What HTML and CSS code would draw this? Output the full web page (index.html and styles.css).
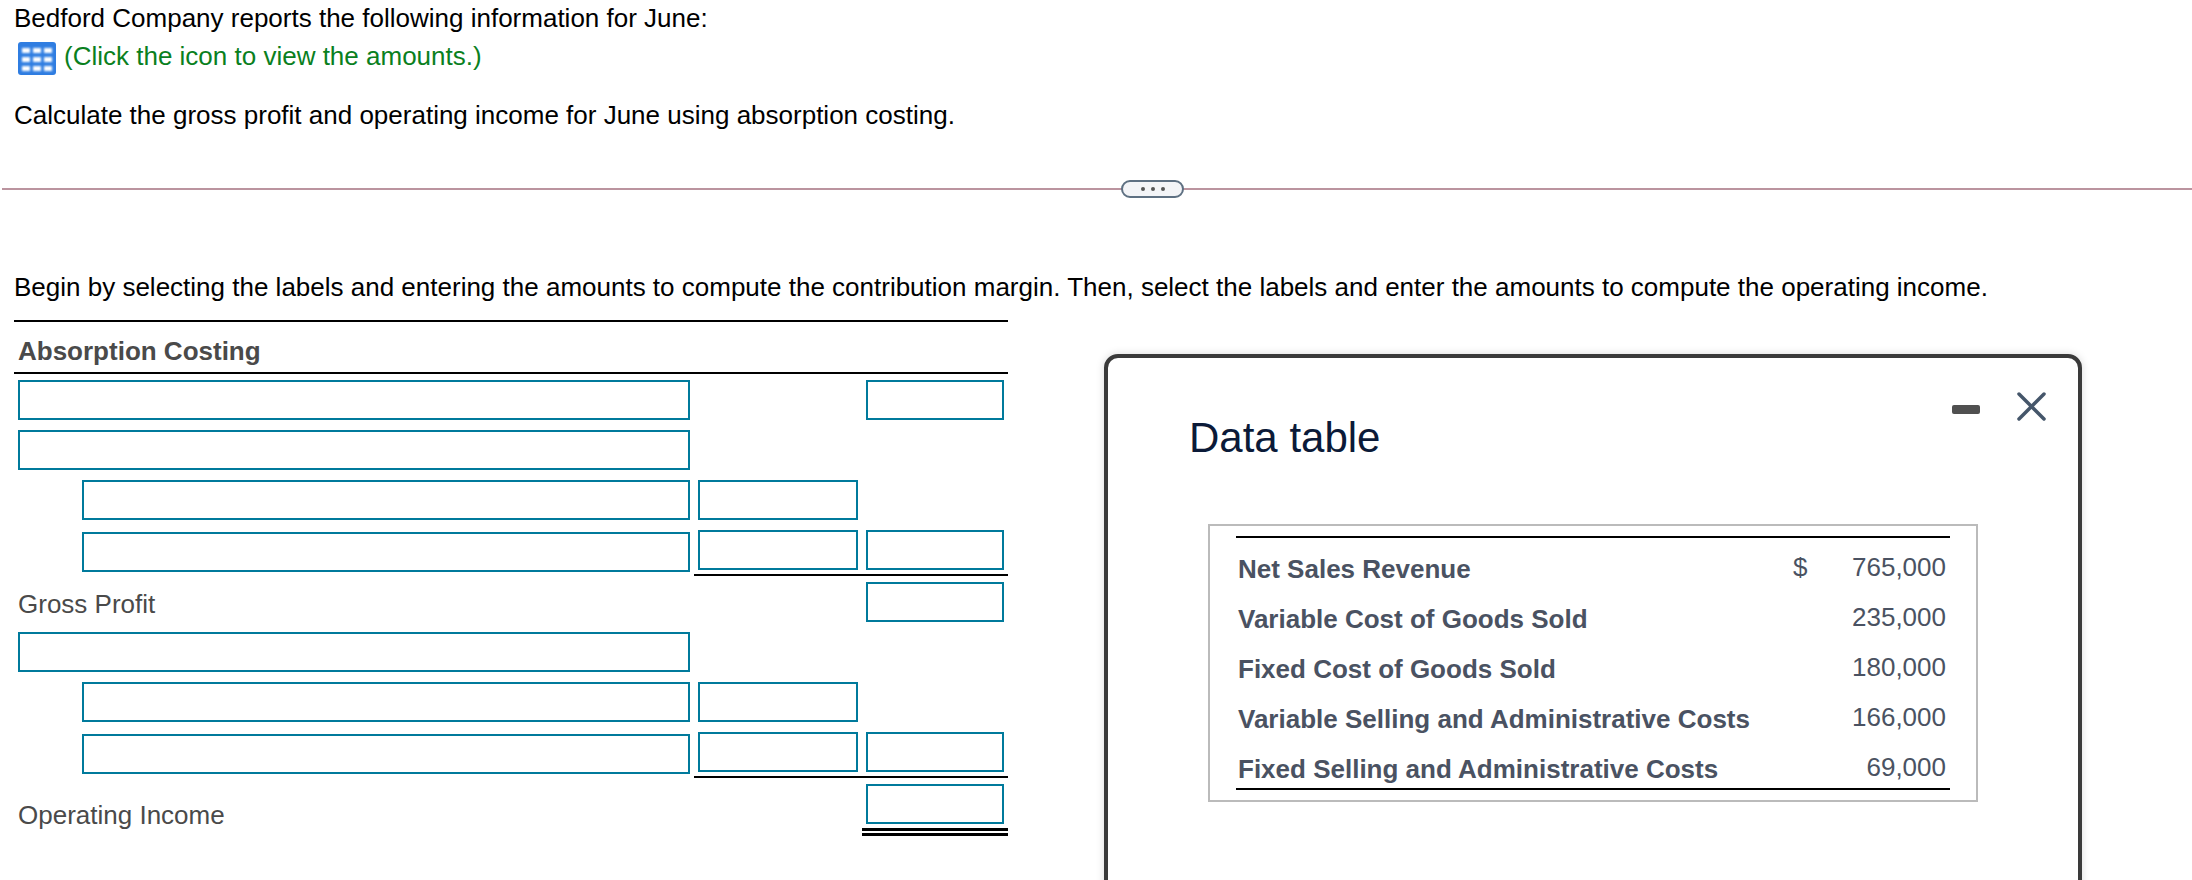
FILE: index.html
```html
<!DOCTYPE html>
<html lang="en">
    <head>
        <meta charset="UTF-8" />
        <title>Absorption Costing</title>
        <link rel="stylesheet" href="styles.css">
    </head>
    <body>
        <!-- question -->
        <section class="question">
            <p class="line">Bedford Company reports the following information for June:</p>
            <p class="line hint">
                <svg class="grid-icon" width="38" height="33" viewBox="0 0 38 33">
                    <defs>
                        <filter id="soft"><feGaussianBlur stdDeviation="0.8" /></filter>
                    </defs>
                    <rect width="38" height="33" rx="3" fill="#2f7de1" />
                    <g fill="#fff" filter="url(#soft)">
                        <rect x="4" y="6" width="8" height="5" />
                        <rect x="15" y="6" width="8" height="5" />
                        <rect x="26" y="6" width="8" height="5" />
                        <rect x="4" y="15" width="8" height="5" />
                        <rect x="15" y="15" width="8" height="5" />
                        <rect x="26" y="15" width="8" height="5" />
                        <rect x="4" y="24" width="8" height="5" />
                        <rect x="15" y="24" width="8" height="5" />
                        <rect x="26" y="24" width="8" height="5" />
                    </g>
                </svg>
                <span class="hint-text">(Click the icon to view the amounts.)</span>
            </p>
            <p class="line calc">Calculate the gross profit and operating income for June using absorption costing.</p>
        </section>

        <!-- divider -->
        <div class="divider">
            <button class="more"><i></i><i></i><i></i></button>
        </div>

        <p class="line intro">Begin by selecting the labels and entering the amounts to compute the contribution margin. Then, select the labels and enter the amounts to compute the operating income.</p>

        <!-- worksheet -->
        <section class="sheet">
            <h2 class="sheet-title">Absorption Costing</h2>

            <div class="row">
                <div class="cell"><input class="box" /></div>
                <div class="cell"></div>
                <div class="cell"><input class="box" /></div>
            </div>
            <div class="row">
                <div class="cell"><input class="box" /></div>
            </div>
            <div class="row">
                <div class="cell indent"><input class="box" /></div>
                <div class="cell"><input class="box" /></div>
            </div>
            <div class="row">
                <div class="cell indent low"><input class="box" /></div>
                <div class="cell ruled"><input class="box" /></div>
                <div class="cell ruled"><input class="box" /></div>
            </div>
            <div class="row total">
                <div class="cell name">Gross Profit</div>
                <div class="cell"></div>
                <div class="cell"><input class="box" /></div>
            </div>
            <div class="row">
                <div class="cell"><input class="box" /></div>
            </div>
            <div class="row">
                <div class="cell indent"><input class="box" /></div>
                <div class="cell"><input class="box" /></div>
            </div>
            <div class="row">
                <div class="cell indent low"><input class="box" /></div>
                <div class="cell ruled"><input class="box" /></div>
                <div class="cell ruled"><input class="box" /></div>
            </div>
            <div class="row total">
                <div class="cell name last">Operating Income</div>
                <div class="cell"></div>
                <div class="cell ruled-double"><input class="box" /></div>
            </div>
        </section>

        <!-- popup -->
        <aside class="modal">
            <div class="modal-tools">
                <span class="minimize"></span>
                <svg class="close" width="29" height="29" viewBox="0 0 29 29">
                    <path d="M2 2 L27 27 M27 2 L2 27" />
                </svg>
            </div>
            <h3 class="modal-title">Data table</h3>
            <div class="data-wrap">
                <table class="data">
                    <tr><th>Net Sales Revenue</th><td class="cur">$</td><td class="num">765,000</td></tr>
                    <tr><th>Variable Cost of Goods Sold</th><td class="cur"></td><td class="num">235,000</td></tr>
                    <tr><th>Fixed Cost of Goods Sold</th><td class="cur"></td><td class="num">180,000</td></tr>
                    <tr><th>Variable Selling and Administrative Costs</th><td class="cur"></td><td class="num">166,000</td></tr>
                    <tr><th>Fixed Selling and Administrative Costs</th><td class="cur"></td><td class="num">69,000</td></tr>
                </table>
            </div>
        </aside>
    </body>
</html>
```

FILE: styles.css
```css
html,
body {
    margin: 0px;
    padding: 0px;
    width: 100%;
    height: 100%;
    overflow: hidden;
}

body {
    position: relative;
    height: 880px;
    background: #fff;
    color: #000;
    font-family: "Liberation Sans", Arial, sans-serif;
    font-size: 26px;
}

p,
h2,
h3 {
    margin: 0px;
    font-weight: normal;
}

/* question */
.question {
    padding: 3px 0 0 14px;
}

.line {
    line-height: 30px;
}

.hint {
    display: flex;
    align-items: center;
    gap: 8px;
    height: 33px;
    margin: 9px 0 0 4px;
    color: #0a801e;
}

.hint-text {
    margin-bottom: 5px;
}

.grid-icon {
    flex-shrink: 0;
}

.calc {
    margin-top: 25px;
}

/* divider */
.divider {
    display: flex;
    align-items: center;
    justify-content: center;
    height: 2px;
    margin: 58px 0 0 2px;
    padding-left: 111px;
    background: #bb949f;
}

.more {
    display: flex;
    align-items: center;
    justify-content: center;
    gap: 6px;
    flex-shrink: 0;
    width: 63px;
    height: 18px;
    padding: 0;
    border: 2px solid #5e7082;
    border-radius: 9px;
    background: #f3f4f7;
}

.more i {
    width: 4px;
    height: 4px;
    border-radius: 50%;
    background: #555;
}

.intro {
    margin: 82px 0 0 14px;
}

/* worksheet */
.sheet {
    width: 994px;
    margin: 18px 0 0 14px;
    border-top: 2px solid #000;
}

.sheet-title {
    height: 50px;
    margin-bottom: 2px;
    padding-left: 4px;
    border-bottom: 2px solid #000;
    color: #4a4a4a;
    font-size: 26px;
    font-weight: bold;
    line-height: 58px;
}

.row {
    display: grid;
    grid-template-columns: 680px 168px 146px;
    height: 50px;
}

.row.total {
    height: 52px;
}

.cell {
    box-sizing: border-box;
    padding: 4px;
}

.total .cell {
    padding-top: 6px;
}

.indent {
    padding-left: 68px;
}

.low {
    padding-top: 6px;
}

.ruled {
    height: 50px;
    border-bottom: 2px solid #000;
}

.ruled-double {
    height: 58px;
    border-bottom: 8px double #000;
}

.box {
    display: block;
    box-sizing: border-box;
    width: 100%;
    height: 40px;
    padding: 0;
    border: 2px solid #007a9c;
    border-radius: 0;
    background: #fff;
}

.total .name {
    padding-top: 13px;
    color: #4a4a4a;
    line-height: 30px;
}

.total .name.last {
    padding-top: 22px;
}

/* popup */
.modal {
    position: absolute;
    top: 354px;
    left: 1104px;
    box-sizing: border-box;
    width: 978px;
    height: 600px;
    padding: 0 100px 0 81px;
    border: 4px solid #3a3a3a;
    border-radius: 14px;
    background: #fff;
    box-shadow: 0 0 8px rgba(0, 0, 0, 0.15);
}

.modal-tools {
    position: absolute;
    top: 34px;
    right: 32px;
    display: flex;
    align-items: center;
    gap: 37px;
}

.minimize {
    width: 28px;
    height: 9px;
    margin-top: 5px;
    border-radius: 2px;
    background: #505050;
}

.close path {
    fill: none;
    stroke: #45566a;
    stroke-width: 3.5;
    stroke-linecap: round;
}

.modal-title {
    padding-top: 54px;
    color: #0b1a38;
    font-size: 42px;
    line-height: 52px;
}

.data-wrap {
    box-sizing: border-box;
    width: 770px;
    margin: 60px 0 0 19px;
    padding: 10px 26px;
    border: 2px solid #bbb;
}

.data {
    width: 100%;
    border-collapse: separate;
    border-spacing: 0;
    border-top: 2px solid #000;
    border-bottom: 2px solid #000;
    color: #4a5262;
    font-size: 26px;
}

.data tr {
    height: 50px;
}

.data th {
    padding: 13px 0 0 2px;
    font-weight: bold;
    text-align: left;
}

.data .cur {
    width: 24px;
    padding: 8px 0 0 0;
    text-align: left;
}

.data .num {
    width: 129px;
    padding: 8px 4px 0 0;
    text-align: right;
}
```
